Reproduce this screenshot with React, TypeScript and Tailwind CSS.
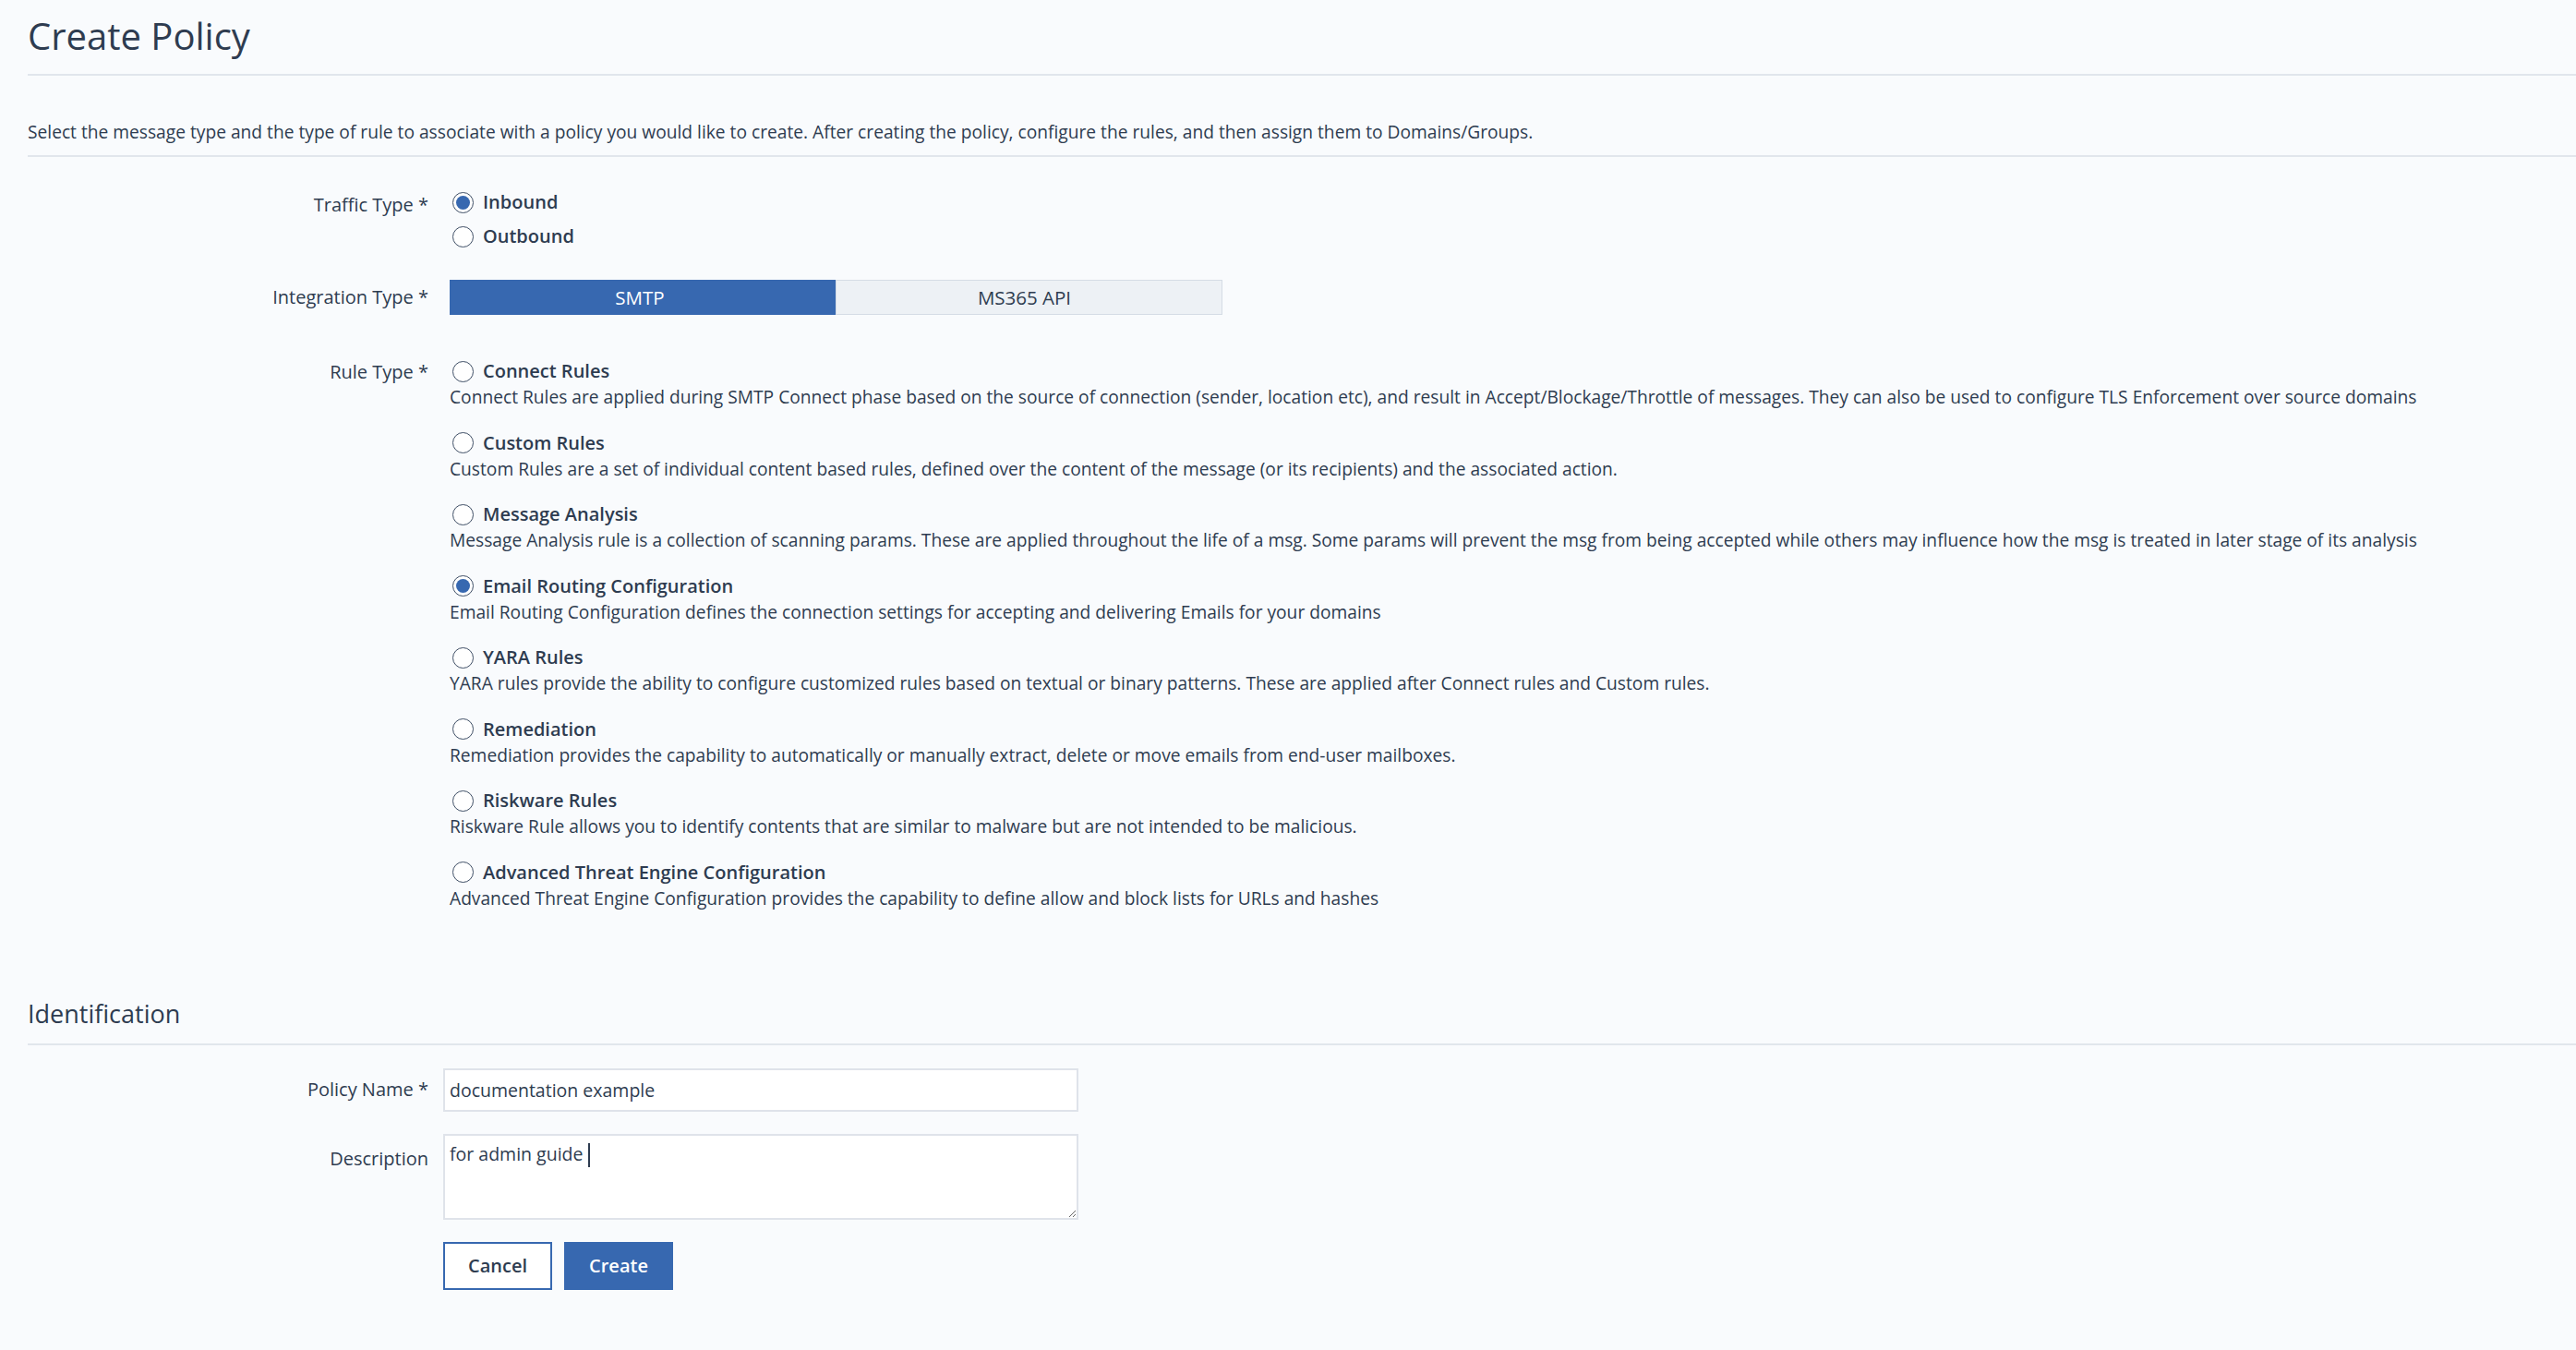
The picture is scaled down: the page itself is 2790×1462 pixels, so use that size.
import React from "react";

const rules = [
  {
    name: "Connect Rules",
    desc: "Connect Rules are applied during SMTP Connect phase based on the source of connection (sender, location etc), and result in Accept/Blockage/Throttle of messages. They can also be used to configure TLS Enforcement over source domains",
  },
  {
    name: "Custom Rules",
    desc: "Custom Rules are a set of individual content based rules, defined over the content of the message (or its recipients) and the associated action.",
  },
  {
    name: "Message Analysis",
    desc: "Message Analysis rule is a collection of scanning params. These are applied throughout the life of a msg. Some params will prevent the msg from being accepted while others may influence how the msg is treated in later stage of its analysis",
  },
  {
    name: "Email Routing Configuration",
    desc: "Email Routing Configuration defines the connection settings for accepting and delivering Emails for your domains",
    checked: true,
  },
  {
    name: "YARA Rules",
    desc: "YARA rules provide the ability to configure customized rules based on textual or binary patterns. These are applied after Connect rules and Custom rules.",
  },
  {
    name: "Remediation",
    desc: "Remediation provides the capability to automatically or manually extract, delete or move emails from end-user mailboxes.",
  },
  {
    name: "Riskware Rules",
    desc: "Riskware Rule allows you to identify contents that are similar to malware but are not intended to be malicious.",
  },
  {
    name: "Advanced Threat Engine Configuration",
    desc: "Advanced Threat Engine Configuration provides the capability to define allow and block lists for URLs and hashes",
  },
];

function Radio({ checked }: { checked?: boolean }) {
  return (
    <span className="flex h-[23px] w-[23px] shrink-0 items-center justify-center rounded-full border-[1.5px] border-[#3f4f66] bg-white">
      {checked && <span className="h-[15px] w-[15px] rounded-full bg-[#3768b0]" />}
    </span>
  );
}

function Label({ children }: { children: React.ReactNode }) {
  return <div className="text-right text-[20px] text-[#2e3c50]">{children}</div>;
}

export default function App() {
  return (
    <div
      className="min-h-[1462px] bg-[#f9fbfd] pl-[30px] text-[#2e3c50]"
      style={{ fontFamily: '"Open Sans", "Noto Sans", sans-serif' }}
    >
      <h1 className="pt-[12px] pb-[14px] text-[40px] leading-[54px] font-normal text-[#2e3c50]">Create Policy</h1>
      <div className="h-[2px] bg-[#e1e6ec]" />
      <p className="mt-[47px] mb-[11px] text-[19.2px] leading-[28px]">
        Select the message type and the type of rule to associate with a policy you would like to create. After creating the
        policy, configure the rules, and then assign them to Domains/Groups.
      </p>
      <div className="h-[2px] bg-[#e1e6ec]" />

      <div className="mt-[35px] grid grid-cols-[434px_1fr] gap-x-[23px]">
        <div className="pt-[2px]">
          <Label>Traffic Type *</Label>
        </div>
        <div className="flex flex-col gap-[9px]">
          <div className="flex items-center gap-[10px] pl-[3px]">
            <Radio checked />
            <span className="text-[20px] font-semibold leading-[28px]">Inbound</span>
          </div>
          <div className="flex items-center gap-[10px] pl-[3px]">
            <Radio />
            <span className="text-[20px] font-semibold leading-[28px]">Outbound</span>
          </div>
        </div>

        <div className="mt-[33px] flex h-[38px] items-center justify-end">
          <Label>Integration Type *</Label>
        </div>
        <div className="mt-[33px] flex h-[38px] w-[837px]">
          <div className="flex w-[418px] items-center justify-center border border-[#3768b0] bg-[#3768b0] pr-[6px] text-[20.5px] text-white">
            SMTP
          </div>
          <div className="flex flex-1 items-center justify-center border border-[#d5dce5] bg-[#edf1f5] pr-[10px] text-[20.5px] text-[#2e3c50]">
            MS365 API
          </div>
        </div>

        <div className="mt-[47px]">
          <Label>Rule Type *</Label>
        </div>
        <div className="mt-[47px] flex flex-col gap-[22.5px]">
          {rules.map((r) => (
            <div key={r.name}>
              <div className="flex h-[28px] items-center gap-[10px] pl-[3px]">
                <Radio checked={r.checked} />
                <span className="text-[20px] font-semibold leading-[28px]">{r.name}</span>
              </div>
              <div className="text-[19.2px] leading-[27px]">{r.desc}</div>
            </div>
          ))}
        </div>
      </div>

      <h2 className="mt-[94px] pb-[14px] text-[27px] leading-[36px] font-normal">Identification</h2>
      <div className="h-[2px] bg-[#e1e6ec]" />

      <div className="mt-[25px] grid grid-cols-[434px_1fr] gap-x-[16px] gap-y-[24px]">
        <div className="flex h-[47px] items-center justify-end">
          <Label>Policy Name *</Label>
        </div>
        <input
          readOnly
          value="documentation example"
          className="h-[47px] w-[688px] border-2 border-[#dfe3ea] bg-white px-[5px] text-[19.5px] text-[#2e3c50] outline-none"
        />

        <div className="pt-[12px]">
          <Label>Description</Label>
        </div>
        <div className="relative h-[93px] w-[688px]">
          <textarea
            readOnly
            value="for admin guide"
            className="h-full w-full border-2 border-[#dfe3ea] bg-white px-[5px] py-[5px] text-[19.5px] text-[#2e3c50] outline-none"
          />
          <span className="pointer-events-none absolute top-[10px] left-[157px] h-[26px] w-[2px] bg-[#2e3c50]" />
        </div>

        <div />
        <div className="flex gap-[13px]">
          <button className="h-[52px] w-[118px] border-2 border-[#3768b0] bg-white text-[20px] font-semibold text-[#2e3c50]">
            Cancel
          </button>
          <button className="h-[52px] w-[118px] bg-[#3768b0] text-[20px] font-semibold text-white">Create</button>
        </div>
      </div>
    </div>
  );
}
